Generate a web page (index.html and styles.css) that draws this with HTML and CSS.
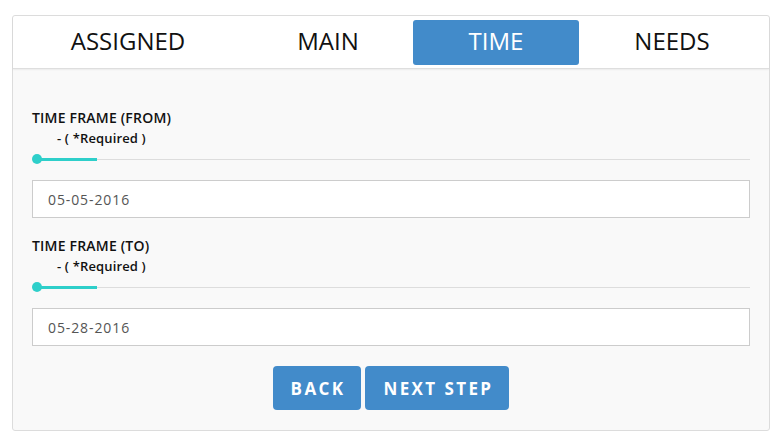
FILE: index.html
```html
<!DOCTYPE html>
<html>
<head>
<meta charset="utf-8">
<link rel="stylesheet" href="styles.css">
</head>
<body>
<div class="card">
  <div class="tabs">
    <div class="tab">ASSIGNED</div>
    <div class="tab">MAIN</div>
    <div class="tab active">TIME</div>
    <div class="tab">NEEDS</div>
  </div>
  <div class="body">
    <div class="field">
      <div class="label">TIME FRAME (FROM)</div>
      <div class="req">- ( *Required )</div>
      <div class="slider"><span class="fill"></span><span class="knob"></span></div>
      <div class="input">05-05-2016</div>
    </div>
    <div class="field">
      <div class="label">TIME FRAME (TO)</div>
      <div class="req">- ( *Required )</div>
      <div class="slider"><span class="fill"></span><span class="knob"></span></div>
      <div class="input">05-28-2016</div>
    </div>
    <div class="actions">
      <button class="btn">BACK</button>
      <button class="btn">NEXT STEP</button>
    </div>
  </div>
</div>
</body>
</html>
```
FILE: styles.css
```css
html, body { margin: 0; padding: 0; background: #fff; }
body { font-family: "Open Sans", "Liberation Sans", sans-serif; }
.card {
  box-sizing: border-box;
  width: 758px;
  margin: 15px 0 0 12px;
  border: 1px solid #dcdcdc;
  border-radius: 3px;
  background: #f9f9f9;
}
.tabs {
  display: grid;
  grid-template-columns: 230px 170px 166px 186px;
  background: #fff;
  padding: 4px 0 3px;
  border-bottom: 1px solid #dedede;
  box-shadow: 0 1px 2px rgba(0,0,0,0.06);
  border-radius: 3px 3px 0 0;
}
.tab {
  box-sizing: border-box;
  height: 45px;
  padding-bottom: 4px;
  display: flex;
  align-items: center;
  justify-content: center;
  font-size: 24px;
  color: #111;
}
.tab.active {
  background: #428bca;
  color: #fff;
  border-radius: 3px;
}
.body { padding: 39px 19px 20px; }
.field { margin-bottom: 18px; }
.label {
  font-size: 14px;
  font-weight: 600;
  color: #111;
  line-height: 20px;
  letter-spacing: 0.2px;
}
.req {
  font-size: 13px;
  font-weight: 600;
  color: #111;
  line-height: 20px;
  padding-left: 25px;
  letter-spacing: 0.15px;
}
.slider {
  position: relative;
  height: 1px;
  background: #dddddd;
  margin: 11px 0 20px;
}
.fill {
  position: absolute;
  left: 5px; top: -1px;
  width: 60px; height: 3px;
  background: #2ecfca;
}
.knob {
  position: absolute;
  left: 0; top: -5px;
  width: 10px; height: 10px;
  border-radius: 50%;
  background: #2ecfca;
}
.input {
  box-sizing: border-box;
  height: 38px;
  border: 1px solid #cccccc;
  background: #fff;
  padding: 0 15px;
  display: flex;
  align-items: center;
  font-size: 14px;
  color: #555;
  letter-spacing: 0.9px;
}
.actions {
  display: flex;
  justify-content: center;
  gap: 4px;
  margin-top: 20px;
}
.btn {
  font-family: inherit;
  height: 44px;
  border: none;
  border-radius: 4px;
  background: #428bca;
  color: #fff;
  font-weight: 700;
  font-size: 17px;
  letter-spacing: 2.4px;
  padding: 0 16px 0 18px;
}
```
